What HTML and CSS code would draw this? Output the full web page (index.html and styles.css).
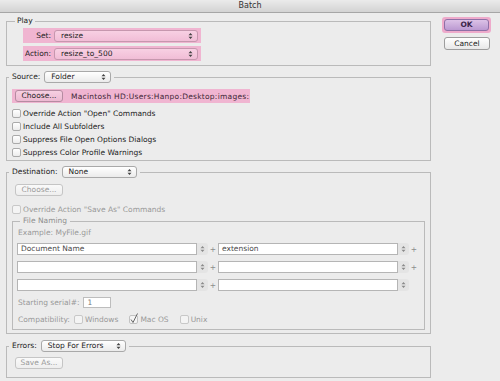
FILE: index.html
```html
<!DOCTYPE html>
<html lang="en">
  <head>
    <meta charset="UTF-8" />
    <title>Batch</title>
    <link rel="stylesheet" href="styles.css">
  </head>
  <body>
    <div class="titlebar">Batch</div>
    <div class="dialog">
      <div class="groups">
        <!-- Play -->
        <fieldset class="group play">
          <legend>Play</legend>
          <div class="body">
            <div class="hl play-row">
              <label>Set:</label>
              <div class="popup set"><span>resize</span><svg class="arrows" width="5" height="8" viewBox="0 0 5 8"><path d="M0.5 3.2 2.5 1 4.5 3.2ZM0.5 4.8 2.5 7 4.5 4.8Z"/></svg></div>
            </div>
            <div class="hl play-row">
              <label>Action:</label>
              <div class="popup set"><span>resize_to_500</span><svg class="arrows" width="5" height="8" viewBox="0 0 5 8"><path d="M0.5 3.2 2.5 1 4.5 3.2ZM0.5 4.8 2.5 7 4.5 4.8Z"/></svg></div>
            </div>
          </div>
        </fieldset>

        <!-- Source -->
        <fieldset class="group source">
          <legend class="head">
            <span>Source:</span>
            <div class="popup folder"><span>Folder</span><svg class="arrows" width="5" height="8" viewBox="0 0 5 8"><path d="M0.5 3.2 2.5 1 4.5 3.2ZM0.5 4.8 2.5 7 4.5 4.8Z"/></svg></div>
          </legend>
          <div class="body">
            <div class="hl choose-row">
              <button class="btn">Choose...</button>
              <span class="path">Macintosh HD:Users:Hanpo:Desktop:images:</span>
            </div>
            <div class="checks">
              <div class="check"><span class="box"></span>Override Action "Open" Commands</div>
              <div class="check"><span class="box"></span>Include All Subfolders</div>
              <div class="check"><span class="box"></span>Suppress File Open Options Dialogs</div>
              <div class="check"><span class="box"></span>Suppress Color Profile Warnings</div>
            </div>
          </div>
        </fieldset>

        <!-- Destination -->
        <fieldset class="group dest">
          <legend class="head">
            <span>Destination:</span>
            <div class="popup none"><span>None</span><svg class="arrows" width="5" height="8" viewBox="0 0 5 8"><path d="M0.5 3.2 2.5 1 4.5 3.2ZM0.5 4.8 2.5 7 4.5 4.8Z"/></svg></div>
          </legend>
          <div class="body">
            <button class="btn off">Choose...</button>
            <div class="check off save-as"><span class="box"></span>Override Action "Save As" Commands</div>
            <fieldset class="sub naming">
              <legend>File Naming</legend>
              <div class="body">
                <div class="example">Example: MyFile.gif</div>
                <div class="field-row">
                  <div class="field">Document Name</div>
                  <span class="spin"><svg width="5" height="8" viewBox="0 0 5 8"><path d="M0.5 3.2 2.5 1 4.5 3.2ZM0.5 4.8 2.5 7 4.5 4.8Z"/></svg></span>
                  <span class="plus">+</span>
                  <div class="field">extension</div>
                  <span class="spin"><svg width="5" height="8" viewBox="0 0 5 8"><path d="M0.5 3.2 2.5 1 4.5 3.2ZM0.5 4.8 2.5 7 4.5 4.8Z"/></svg></span>
                  <span class="plus">+</span>
                </div>
                <div class="field-row">
                  <div class="field"></div>
                  <span class="spin"><svg width="5" height="8" viewBox="0 0 5 8"><path d="M0.5 3.2 2.5 1 4.5 3.2ZM0.5 4.8 2.5 7 4.5 4.8Z"/></svg></span>
                  <span class="plus">+</span>
                  <div class="field"></div>
                  <span class="spin"><svg width="5" height="8" viewBox="0 0 5 8"><path d="M0.5 3.2 2.5 1 4.5 3.2ZM0.5 4.8 2.5 7 4.5 4.8Z"/></svg></span>
                  <span class="plus">+</span>
                </div>
                <div class="field-row">
                  <div class="field"></div>
                  <span class="spin"><svg width="5" height="8" viewBox="0 0 5 8"><path d="M0.5 3.2 2.5 1 4.5 3.2ZM0.5 4.8 2.5 7 4.5 4.8Z"/></svg></span>
                  <span class="plus">+</span>
                  <div class="field"></div>
                  <span class="spin"><svg width="5" height="8" viewBox="0 0 5 8"><path d="M0.5 3.2 2.5 1 4.5 3.2ZM0.5 4.8 2.5 7 4.5 4.8Z"/></svg></span>
                </div>
                <div class="serial-row">
                  <span>Starting serial#:</span>
                  <div class="serial">1</div>
                </div>
                <div class="compat-row">
                  <span class="compat-label">Compatibility:</span>
                  <span class="box"></span><span class="opt">Windows</span>
                  <svg class="tick" width="10" height="11" viewBox="0 0 10 11"><rect x="0.5" y="2.5" width="8" height="8" rx="1.5" fill="#f4f4f4" stroke="#c2c2c2"/><path d="M2 6.5 4 9.5 8.5 0.5" fill="none" stroke="#666" stroke-width="1"/></svg><span class="opt">Mac OS</span>
                  <span class="box"></span><span class="opt">Unix</span>
                </div>
              </div>
            </fieldset>
          </div>
        </fieldset>

        <!-- Errors -->
        <fieldset class="group errors">
          <legend class="head">
            <span>Errors:</span>
            <div class="popup stop"><span>Stop For Errors</span><svg class="arrows" width="5" height="8" viewBox="0 0 5 8"><path d="M0.5 3.2 2.5 1 4.5 3.2ZM0.5 4.8 2.5 7 4.5 4.8Z"/></svg></div>
          </legend>
          <div class="body">
            <button class="btn off">Save As...</button>
          </div>
        </fieldset>
      </div>

      <div class="side">
        <div class="ok-wrap"><button class="btn ok">OK</button></div>
        <button class="btn cancel">Cancel</button>
      </div>
    </div>
  </body>
</html>
```

FILE: styles.css
```css
/* Reset */
* {
  margin: 0;
  padding: 0;
  box-sizing: border-box;
}

body {
  width: 500px;
  height: 381px;
  overflow: hidden;
  background: #ececec;
  font-family: "DejaVu Sans", sans-serif;
  font-size: 7.5px;
  color: #222;
}

.titlebar {
  height: 13px;
  line-height: 12px;
  text-align: center;
  font-size: 8px;
  color: #333;
  background: linear-gradient(#ebebeb, #d3d3d3);
  border-bottom: 1px solid #a6a6a6;
}

.dialog {
  display: flex;
  padding: 3px 0 0 6px;
}

.groups {
  width: 425px;
}

/* Group boxes */
fieldset {
  border: 1px solid #bababa;
  min-width: 0;
}

legend {
  line-height: 10px;
  padding: 0 2px;
}

.head {
  display: flex;
  align-items: center;
  gap: 4px;
  margin-left: 2px;
  padding: 0 3px;
}

.play legend {
  margin-left: 8px;
}

.play .body {
  display: flex;
  flex-direction: column;
  gap: 3px;
  padding: 2px 0 4px 16px;
}

.source {
  margin-top: 5px;
}

.source .body {
  padding: 6px 0 1px 5px;
}

.dest {
  margin-top: 5px;
}

.dest > .body {
  padding: 6px 5px 3px 5px;
}

.errors {
  margin-top: 6px;
}

.errors .body {
  padding: 5px 0 8px 8px;
}

/* Pink highlight */
.hl {
  background: #f0b5d1;
}

.play-row {
  width: 178px;
  height: 15px;
  display: flex;
  align-items: center;
}

.play-row label {
  width: 28px;
  margin-right: 3px;
  text-align: right;
}

/* Popup menus */
.popup {
  height: 12px;
  display: flex;
  align-items: center;
  justify-content: space-between;
  padding: 0 4px 0 6px;
  line-height: 10px;
  border: 1px solid #a9a9a9;
  border-radius: 3px;
  background: linear-gradient(#ffffff, #ebebeb);
  color: #222;
}

.hl .popup {
  border-color: #c697ae;
  background: linear-gradient(#f8d0e3, #f1bdd6);
}

.arrows,
.spin svg {
  fill: #444;
}

.popup.set {
  width: 144px;
}

.popup.folder {
  width: 67px;
}

.popup.none {
  width: 75px;
}

.popup.stop {
  width: 85px;
}

/* Buttons */
.btn {
  width: 48px;
  height: 12px;
  font: inherit;
  line-height: 10px;
  color: #222;
  text-align: center;
  border: 1px solid #9d9d9d;
  border-radius: 3px;
  background: linear-gradient(#ffffff, #e8e8e8);
}

.btn.off {
  margin-left: 3px;
  color: #9a9a9a;
  border-color: #c5c5c5;
  background: linear-gradient(#fafafa, #eeeeee);
}

.errors .btn.off {
  margin-left: 0;
}

.choose-row {
  width: 238px;
  height: 14px;
  display: flex;
  align-items: center;
  padding-left: 3px;
}

.hl .btn {
  border-color: #b58ba1;
  background: linear-gradient(#f6cfe1, #ecb9d1);
}

.path {
  margin-left: 8px;
  letter-spacing: 0.25px;
  color: #3d2735;
}

/* Checkboxes */
.checks {
  margin-top: 4px;
}

.check {
  height: 13px;
  display: flex;
  align-items: center;
}

.box {
  width: 9px;
  height: 9px;
  margin-right: 2px;
  border: 1px solid #aaaaaa;
  border-radius: 2px;
  background: linear-gradient(#ffffff, #ececec);
}

.check.off {
  color: #999;
}

.off .box,
.compat-row .box {
  border-color: #c8c8c8;
  background: #f4f4f4;
}

.save-as {
  margin-top: 7px;
}

/* File naming */
.naming legend {
  margin-left: 7px;
  padding: 0 3px;
  color: #8e8e8e;
}

.naming .body {
  padding: 2px 0 4px 4px;
  color: #999;
}

.example {
  line-height: 10px;
  margin-left: 1px;
}

.field-row {
  height: 12px;
  display: flex;
  align-items: center;
  margin-top: 6px;
}

.example + .field-row {
  margin-top: 5px;
}

.field {
  width: 180px;
  height: 12px;
  padding-left: 3px;
  line-height: 10px;
  color: #4a4a4a;
  background: #fff;
  border: 1px solid #b5b5b5;
}

.spin {
  width: 11px;
  height: 12px;
  display: flex;
  align-items: center;
  justify-content: center;
  background: #e4e4e4;
  border-radius: 0 3px 3px 0;
}

.spin svg {
  fill: #8a8a8a;
}

.plus {
  width: 10px;
  text-align: center;
  color: #8c8c8c;
}

.serial-row {
  height: 12px;
  display: flex;
  align-items: center;
  margin-top: 5px;
  margin-left: 1px;
}

.serial {
  width: 28px;
  height: 11px;
  margin-left: 4px;
  padding-left: 3px;
  line-height: 9px;
  color: #777;
  background: #fff;
  border: 1px solid #bdbdbd;
}

.compat-row {
  height: 12px;
  display: flex;
  align-items: center;
  margin-top: 5px;
  margin-left: 1px;
}

.compat-label {
  margin-right: 4px;
}

.opt {
  margin-right: 11px;
}

.tick {
  margin-top: -2px;
  margin-right: 1px;
}

/* Side buttons */
.side {
  width: 50px;
  margin-left: 11px;
  padding-top: 1px;
  display: flex;
  flex-direction: column;
  gap: 4px;
}

.ok-wrap {
  width: 49px;
  height: 16px;
  padding: 2px;
  border-radius: 3px;
  background: #eeaacb;
}

.btn.ok {
  width: 45px;
  font-weight: bold;
  color: #3b2449;
  border-color: #8e70a6;
  background: linear-gradient(#dcc2e7, #bb99d1);
}

.btn.cancel {
  width: 46px;
  height: 13px;
  margin-left: 2px;
}
```
